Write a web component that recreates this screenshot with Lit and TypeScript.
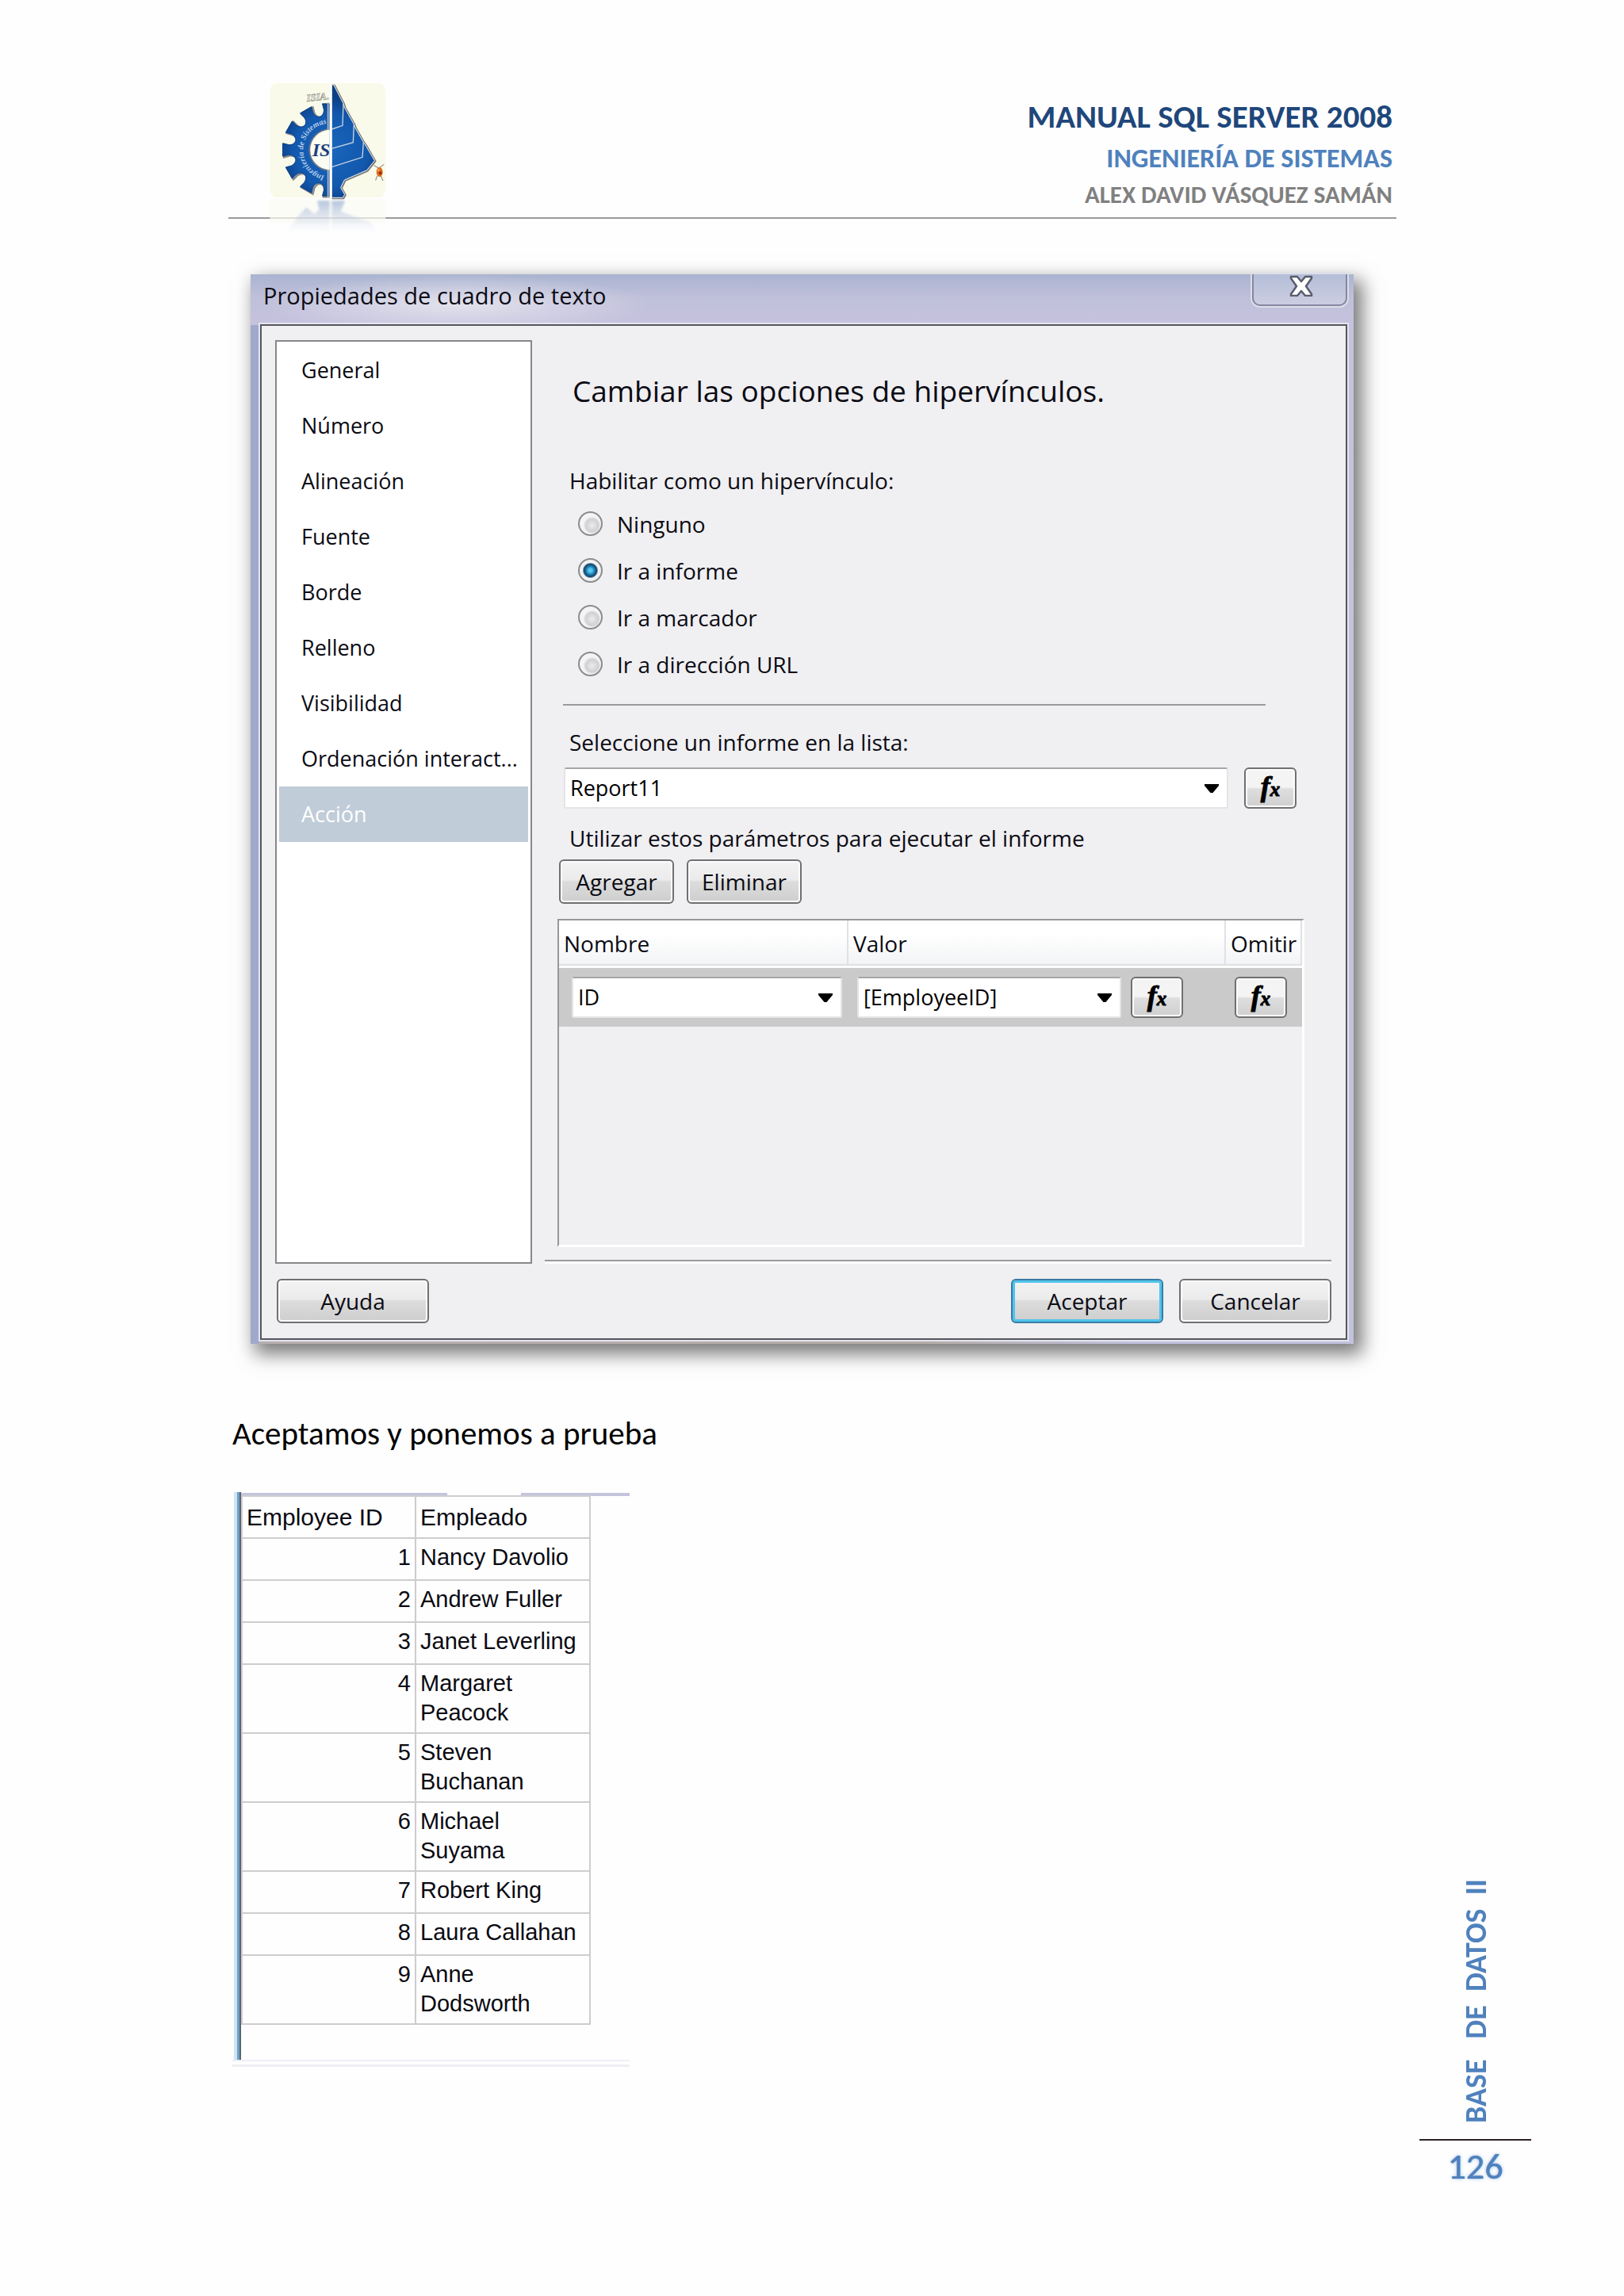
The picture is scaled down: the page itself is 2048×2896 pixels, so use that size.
import { LitElement, html, css } from 'lit';
import { customElement, property, state } from 'lit/decorators.js';
import { classMap } from 'lit/directives/class-map.js';

const SECTIONS = [
  'General', 'Número', 'Alineación', 'Fuente', 'Borde', 'Relleno',
  'Visibilidad', 'Ordenación interact...', 'Acción',
];

const LINK_TARGETS = ['Ninguno', 'Ir a informe', 'Ir a marcador', 'Ir a dirección URL'];

const EMPLOYEES = [
  'Nancy Davolio', 'Andrew Fuller', 'Janet Leverling', 'Margaret\nPeacock',
  'Steven\nBuchanan', 'Michael\nSuyama', 'Robert King', 'Laura Callahan',
  'Anne\nDodsworth',
];

/** Outline of a twelve-tooth gear around the given centre. */
function gearPath(cx: number, cy: number, outer: number, root: number): string {
  const at = (deg: number, r: number) => {
    const a = (deg * Math.PI) / 180;
    return `${(cx + r * Math.cos(a)).toFixed(1)} ${(cy + r * Math.sin(a)).toFixed(1)}`;
  };
  let d = '';
  for (let i = 0; i < 12; i++) {
    const a = i * 30;
    d += `${i ? 'L' : 'M'}${at(a - 8, outer)} L${at(a + 8, outer)} L${at(a + 7, outer - 22)} `;
    d += `C${at(a + 8, root - 8)} ${at(a + 22, root - 8)} ${at(a + 23, outer - 22)} `;
  }
  return d + 'Z';
}

@customElement('school-logo')
class SchoolLogo extends LitElement {
  static styles = css`
    :host { display: block; }
    svg { display: block; width: 160px; height: 197px; }
    .ring { font: italic 700 30px 'Liberation Serif', serif; fill: #b9cfe8; }
    .mono { font: italic 700 72px 'Liberation Serif', serif; fill: #1c3f7c; }
    .top { font: italic 700 38px 'Liberation Serif', serif; fill: #f4f4ea; stroke: #9a9a92; stroke-width: 2px; }
  `;

  render() {
    const gear = gearPath(405, 297, 176, 132);
    const sail = 'M416 50 L424 52 L460 122 L464 136 L500 200 L504 212 L536 268 L542 276 L578 338 L549 374 L464 411 L450 440 L465 466 L458 478 L416 478 Z';
    return html`
      <svg viewBox="160 30 480 591" role="img" aria-label="Ingeniería de Sistemas">
        <defs>
          <radialGradient id="blue" gradientUnits="userSpaceOnUse" cx="410" cy="300" r="200">
            <stop offset="0" stop-color="#1a66bd"></stop>
            <stop offset=".7" stop-color="#1258ad"></stop>
            <stop offset="1" stop-color="#0c3f86"></stop>
          </radialGradient>
          <linearGradient id="fade" x1="0" y1="0" x2="0" y2="1">
            <stop offset="0" stop-color="#8fa6cf" stop-opacity=".65"></stop>
            <stop offset="1" stop-color="#c4cfe6" stop-opacity="0"></stop>
          </linearGradient>
          <clipPath id="left"><rect x="160" y="30" width="248" height="455"></rect></clipPath>
          <filter id="soft"><feGaussianBlur stdDeviation="5"></feGaussianBlur></filter>
          <path id="arc" d="M392 396 A 100 100 0 0 1 396 198"></path>
        </defs>
        <rect x="182" y="44" width="438" height="434" rx="30" fill="#f9fae9"></rect>
        <rect x="182" y="484" width="438" height="90" fill="#fbfbf4" opacity=".7"></rect>
        <g filter="url(#soft)" fill="url(#fade)">
          <path d="M362 490 H408 V610 H245 L290 545 L320 515 L350 540 L368 525 Z"></path>
          <path d="M416 490 H466 L450 530 L560 570 L590 610 H416 Z"></path>
        </g>
        <g clip-path="url(#left)">
          <path d=${gear} fill="none" stroke="#8a8a8a" stroke-width="8" transform="translate(5 3)"></path>
          <path d=${gear} fill="url(#blue)" stroke="#0d3f86" stroke-width="3"></path>
          <circle cx="410" cy="297" r="78" fill="#fbfcf2" stroke="#6d7784" stroke-width="5"></circle>
        </g>
        <path d="M402 118 V222 M402 372 V478" stroke="#b9bcb8" stroke-width="5" fill="none"></path>
        <text class="ring"><textPath href="#arc" startOffset="4">Ingeniería de Sistemas</textPath></text>
        <text class="mono" x="342" y="322">IS</text>
        <text class="top" x="322" y="114" transform="rotate(-6 322 114)">ISIA.</text>
        <path d=${sail} fill="url(#blue)" stroke="#77797b" stroke-width="7" stroke-linejoin="round" transform="translate(3 2)"></path>
        <path d=${sail} fill="url(#blue)" stroke="#f2f3ec" stroke-width="3" stroke-linejoin="round"></path>
        <g fill="none" stroke="#c9d3df" stroke-width="4">
          <path d="M460 122 L457 205 L416 219"></path>
          <path d="M500 200 L497 269 L416 292"></path>
          <path d="M536 268 L532 325 L416 362"></path>
        </g>
        <path d="M412 46 V482" stroke="#fff" stroke-width="7"></path>
        <g stroke="#7d7568" stroke-width="3" fill="none">
          <path d="M576 356 L594 366 L614 352 M588 396 L582 412 M602 396 L610 414"></path>
        </g>
        <ellipse cx="597" cy="381" rx="12" ry="18" fill="#dd6d1c"></ellipse>
        <circle cx="600" cy="385" r="6" fill="#9c2a12"></circle>
        <circle cx="593" cy="374" r="4" fill="#f4b04a"></circle>
      </svg>
    `;
  }
}

@customElement('fx-button')
class FxButton extends LitElement {
  @property() label = 'Expresión';

  static styles = css`
    :host { display: block; flex: none; }
    .fx {
      display: flex;
      justify-content: center;
      align-items: baseline;
      box-sizing: border-box;
      width: 66px;
      height: 52px;
      padding: 0;
      border: 2px solid #707070;
      border-radius: 6px;
      background: linear-gradient(#f4f4f4 0 48%, #dedede 52%, #cfcfcf);
      box-shadow: inset 0 0 0 2px #fcfcfc;
      color: #000;
      font: italic 700 36px/44px 'Liberation Serif', serif;
      -webkit-text-stroke: 1px #000;
    }
    .x { padding-top: 4px; font-size: 25px; }
  `;

  render() {
    return html`<button class="fx" type="button" aria-label=${this.label}><span>f</span><span class="x">x</span></button>`;
  }
}

@customElement('drop-list')
class DropList extends LitElement {
  @property() value = '';
  @property() label = '';

  static styles = css`
    :host { display: block; flex: 1; min-width: 0; }
    .wrap { display: grid; align-items: center; }
    .list, .arrow { grid-area: 1 / 1; }
    .list {
      appearance: none;
      box-sizing: border-box;
      width: 100%;
      height: 52px;
      margin: 0;
      padding: 0 44px 0 6px;
      border: 2px solid #e4e4e6;
      border-top-color: #a6a6a8;
      border-radius: 3px;
      background: #fff;
      color: #000;
      font: 27px/40px 'Open Sans', sans-serif;
    }
    .arrow { justify-self: end; width: 18px; height: 11px; margin-right: 12px; pointer-events: none; }
  `;

  render() {
    return html`
      <div class="wrap">
        <select class="list" aria-label=${this.label}><option selected>${this.value}</option></select>
        <svg class="arrow" viewBox="0 0 18 11" aria-hidden="true"><path d="M0 0H18V2L10.500 11H7.500L0 2Z"></path></svg>
      </div>
    `;
  }
}

@customElement('text-box-dialog')
class TextBoxDialog extends LitElement {
  @state() private section = 'Acción';
  @state() private target = 'Ir a informe';

  static styles = css`
    :host { display: block; }
    .dialog {
      display: flex;
      flex-direction: column;
      padding: 0 8px 5px 12px;
      background:
        linear-gradient(90deg, rgba(159, 169, 203, 1) 0 10px, transparent 12px) 0 64px / 100% 100% no-repeat,
        linear-gradient(90deg, #b9aeb0 20%, #b5aca5 60%, #c3c2de 80%) 0 100% / 100% 6px no-repeat,
        linear-gradient(#a9b4d0, #c0c0da 30px, #c5c2de 60px, #c3c2dc);
      box-shadow: 8px 10px 22px 3px rgba(0, 0, 0, 0.52);
      color: #0b0b14;
      font: 28px/40px 'Open Sans', sans-serif;
    }
    .title-bar { display: flex; justify-content: space-between; height: 63px; }
    .title {
      margin: 0;
      padding: 6px 60px 0 4px;
      background: radial-gradient(ellipse at 50% 60%, rgba(232, 232, 240, 0.85), rgba(232, 232, 240, 0) 70%);
      font: 29px/42px 'Open Sans', sans-serif;
    }
    .close {
      display: flex;
      justify-content: center;
      box-sizing: border-box;
      width: 120px;
      height: 40px;
      padding: 0;
      border: 2px solid #85879f;
      border-top: 0;
      border-radius: 0 0 10px 10px;
      background: linear-gradient(#b4bed8, #cccde2);
      box-shadow: 0 0 0 2px #dcdeea;
    }
    .close-icon { width: 30px; height: 28px; margin-left: 4px; }
    .client {
      display: grid;
      grid-template-columns: 324px minmax(0, 1fr);
      column-gap: 16px;
      row-gap: 19px;
      padding: 18px 18px 19px 17px;
      border: 2px solid #56565c;
      background: #f0eff1;
      box-shadow: 0 0 0 2px #e2e5f0;
    }
    .sections {
      display: flex;
      flex-direction: column;
      margin: 0;
      padding: 1px 3px;
      border: 2px solid #88888a;
      background: #fff;
      list-style: none;
    }
    .section {
      box-sizing: border-box;
      display: block;
      width: 100%;
      height: 70px;
      padding: 0 0 0 28px;
      border: 0;
      background: none;
      color: inherit;
      font: 27px/66px 'Open Sans', sans-serif;
      text-align: left;
      white-space: nowrap;
    }
    .section.active { background: #c0ccd8; color: #fff; }
    .options { display: flex; flex-direction: column; padding-top: 39px; }
    .heading { margin: 0 0 68px 35px; font: 37px/50px 'Open Sans', sans-serif; }
    .targets { margin: 0; padding: 0; border: 0; }
    .caption { display: block; margin: 0; padding: 0 0 0 31px; }
    .target-list { display: grid; grid-auto-rows: 59px; margin: 5px 0 21px 42px; }
    .target { display: flex; align-items: center; gap: 18px; }
    .radio {
      appearance: none;
      box-sizing: border-box;
      width: 31px;
      height: 31px;
      margin: 0;
      border: 2px solid #8b8c8e;
      border-radius: 50%;
      background: radial-gradient(circle at 58% 58%, #ececec, #cfd0d2 8px, #f4f4f4 11px);
    }
    .radio:checked {
      background: radial-gradient(circle at 50% 50%, #5cc8f0 0 2px, #1987b8 5px, #143f66 8px, #f2f2f2 10px);
    }
    .rule { width: 886px; max-width: calc(100% - 23px); height: 2px; margin: 0 0 26px 23px; border: 0; background: #9b9b9d; }
    .report-row { display: flex; gap: 20px; margin: 12px 44px 17px 24px; }
    .actions { display: flex; gap: 16px; margin: 7px 0 19px 18px; }
    .button {
      box-sizing: border-box;
      width: 192px;
      height: 56px;
      padding: 0;
      border: 2px solid #707072;
      border-radius: 6px;
      background: linear-gradient(#f3f3f3 0, #ebebeb 46%, #dcdcdc 50%, #cecece);
      box-shadow: inset 0 0 0 2px #fcfcfc;
      color: inherit;
      font: 28px/40px 'Open Sans', sans-serif;
    }
    .button.narrow { width: 145px; }
    .button.default { border-color: #3a7ba6; box-shadow: inset 0 0 0 3px #4fc4ea; }
    .panel {
      box-sizing: border-box;
      min-height: 414px;
      margin: 0 34px 16px 16px;
      border: 2px solid #fff;
      border-width: 2px 3px 3px 2px;
      border-top-color: #97979a;
      border-left-color: #97979a;
    }
    .params { width: 100%; border-collapse: collapse; table-layout: fixed; }
    .name-col { width: 365px; }
    .omit-col { width: 96px; }
    .params th {
      height: 57px;
      padding: 0 0 0 6px;
      border-bottom: 3px solid #fcfcfc;
      background: linear-gradient(#fff 30%, #f2f3f5);
      box-shadow: inset -2px -2px 0 #dfe1e4;
      font-weight: 400;
      text-align: left;
      vertical-align: middle;
    }
    .params td { height: 74px; padding: 0; background: #cacacb; vertical-align: middle; }
    .cell { display: flex; align-items: center; }
    .cell.name { padding: 0 8px 0 16px; }
    .cell.value { gap: 12px; padding: 0 54px 0 11px; }
    .cell.omit { padding-left: 11px; }
    .bottom-rule { width: 100%; height: 5px; margin: 0; border: 0; background: linear-gradient(#98989a 0 2px, #fff 2px); }
    .footer { grid-column: 1 / -1; display: flex; gap: 20px; padding-left: 2px; }
    .footer .spacer { flex: 1; }
  `;

  render() {
    return html`
      <section class="dialog" role="dialog" aria-labelledby="title">
        <header class="title-bar">
          <h1 class="title" id="title">Propiedades de cuadro de texto</h1>
          <button class="close" type="button" aria-label="Cerrar">
            <svg class="close-icon" viewBox="0 0 30 28" aria-hidden="true">
              <path d="M2 3H10L15 9L20 3H28V5L21 15L28 25V27H20L15 21L10 27H2V25L9 15L2 5Z" fill="#fff" stroke="#5a5c6e" stroke-width="2.500" stroke-linejoin="round"></path>
            </svg>
          </button>
        </header>
        <div class="client">
          <ul class="sections">
            ${SECTIONS.map((name) => html`
              <li><button type="button" class=${classMap({ section: true, active: name === this.section })}
                @click=${() => (this.section = name)}>${name}</button></li>`)}
          </ul>
          <div class="options">
            <h2 class="heading">Cambiar las opciones de hipervínculos.</h2>
            <fieldset class="targets">
              <legend class="caption">Habilitar como un hipervínculo:</legend>
              <div class="target-list">
                ${LINK_TARGETS.map((name) => html`
                  <label class="target"><input class="radio" type="radio" name="target" .checked=${name === this.target}
                    @change=${() => (this.target = name)}><span>${name}</span></label>`)}
              </div>
            </fieldset>
            <hr class="rule">
            <p class="caption">Seleccione un informe en la lista:</p>
            <div class="report-row">
              <drop-list value="Report11" label="Seleccione un informe en la lista"></drop-list>
              <fx-button></fx-button>
            </div>
            <p class="caption">Utilizar estos parámetros para ejecutar el informe</p>
            <div class="actions">
              <button class="button narrow" type="button">Agregar</button>
              <button class="button narrow" type="button">Eliminar</button>
            </div>
            <div class="panel">
              <table class="params">
                <colgroup><col class="name-col"><col><col class="omit-col"></colgroup>
                <thead><tr><th>Nombre</th><th>Valor</th><th>Omitir</th></tr></thead>
                <tbody>
                  <tr>
                    <td><div class="cell name"><drop-list value="ID" label="Nombre"></drop-list></div></td>
                    <td><div class="cell value"><drop-list value="[EmployeeID]" label="Valor"></drop-list><fx-button></fx-button></div></td>
                    <td><div class="cell omit"><fx-button label="Omitir"></fx-button></div></td>
                  </tr>
                </tbody>
              </table>
            </div>
            <hr class="bottom-rule">
          </div>
          <footer class="footer">
            <button class="button" type="button">Ayuda</button>
            <span class="spacer"></span>
            <button class="button default" type="button">Aceptar</button>
            <button class="button" type="button">Cancelar</button>
          </footer>
        </div>
      </section>
    `;
  }
}

@customElement('employee-report')
class EmployeeReport extends LitElement {
  static styles = css`
    :host { display: block; }
    .sheet {
      border-bottom: 2px solid #f0eff4;
      box-shadow: 0 4px 0 #fff, 0 7px 0 #efeef3;
    }
    .view {
      margin-left: 2px;
      padding: 4px 0 44px 9px;
      background:
        linear-gradient(90deg, #cfe4f7 0 4px, #6ea3c4 4px 7px, #56646e 7px 9px, transparent 9px),
        linear-gradient(90deg, #c3c5dc 269px, transparent 269px 362px, #c3c5dc 362px) 0 1px / 100% 4px no-repeat;
    }
    .report { border-collapse: collapse; color: #0a0a12; font: 29px/37px 'Liberation Sans', sans-serif; }
    .report th, .report td {
      box-sizing: border-box;
      height: 53px;
      padding: 5px 5px 6px;
      border: 2px solid #cfcccf;
      font-weight: 400;
      text-align: left;
      vertical-align: top;
      white-space: pre-line;
    }
    .report th { padding: 7px 5px 4px; font-size: 30px; }
    .report .id { width: 219px; }
    .report .name { width: 220px; }
    .report td.id { text-align: right; }
  `;

  render() {
    return html`
      <div class="sheet"><div class="view">
        <table class="report">
          <thead><tr><th class="id">Employee ID</th><th class="name">Empleado</th></tr></thead>
          <tbody>${EMPLOYEES.map((name, i) => html`<tr><td class="id">${i + 1}</td><td class="name">${name}</td></tr>`)}</tbody>
        </table>
      </div></div>
    `;
  }
}

@customElement('app-root')
class AppRoot extends LitElement {
  static styles = css`
    :host { display: block; background: #fefefe; font-family: Carlito, Calibri, Lato, sans-serif; }
    .page {
      box-sizing: border-box;
      display: grid;
      grid-template-columns: minmax(0, 1fr) 141px;
      column-gap: 29px;
      min-height: 100vh;
      padding: 100px 117px 139px 288px;
    }
    .header {
      display: flex;
      justify-content: space-between;
      padding: 0 5px 4px 45px;
      border-bottom: 2px solid #9a9a9a;
      font-weight: 700;
      text-align: right;
    }
    .logo { margin-bottom: -27px; }
    .titles { padding: 19px 0 4px; }
    .titles p { margin: 0; }
    .manual { color: #1f477b; font-size: 41px; line-height: 56px; }
    .career { color: #4f81bd; font-size: 34px; line-height: 49px; }
    .author { color: #808080; font-size: 31px; line-height: 42px; }
    .dialog { margin: 70px 54px 88px 28px; }
    .note { margin: 0 0 49px 5px; color: #000; font-size: 41px; line-height: 50px; }
    .results { width: 501px; max-width: 100%; margin-left: 5px; }
    .folio { display: flex; flex-direction: column; align-items: center; align-self: end; color: #4f81bd; }
    .course { margin: 0 0 20px; font-size: 38px; font-weight: 700; line-height: 42px; white-space: pre; writing-mode: vertical-rl; transform: rotate(180deg); }
    .number {
      align-self: stretch;
      margin: 0;
      padding-top: 7px;
      border-top: 2px solid #2a2228;
      font-size: 46px;
      line-height: 50px;
      text-align: center;
      text-shadow: 0 0 1px #4f81bd, 0 0 5px #a9c4e6;
    }
  `;

  render() {
    return html`
      <div class="page">
        <main>
          <header class="header">
            <school-logo class="logo"></school-logo>
            <div class="titles">
              <p class="manual">MANUAL SQL SERVER 2008</p>
              <p class="career">INGENIERÍA DE SISTEMAS</p>
              <p class="author">ALEX DAVID VÁSQUEZ SAMÁN</p>
            </div>
          </header>
          <text-box-dialog class="dialog"></text-box-dialog>
          <p class="note">Aceptamos y ponemos a prueba</p>
          <employee-report class="results"></employee-report>
        </main>
        <aside class="folio">
          <p class="course">BASE   DE  DATOS  II</p>
          <p class="number">126</p>
        </aside>
      </div>
    `;
  }
}
